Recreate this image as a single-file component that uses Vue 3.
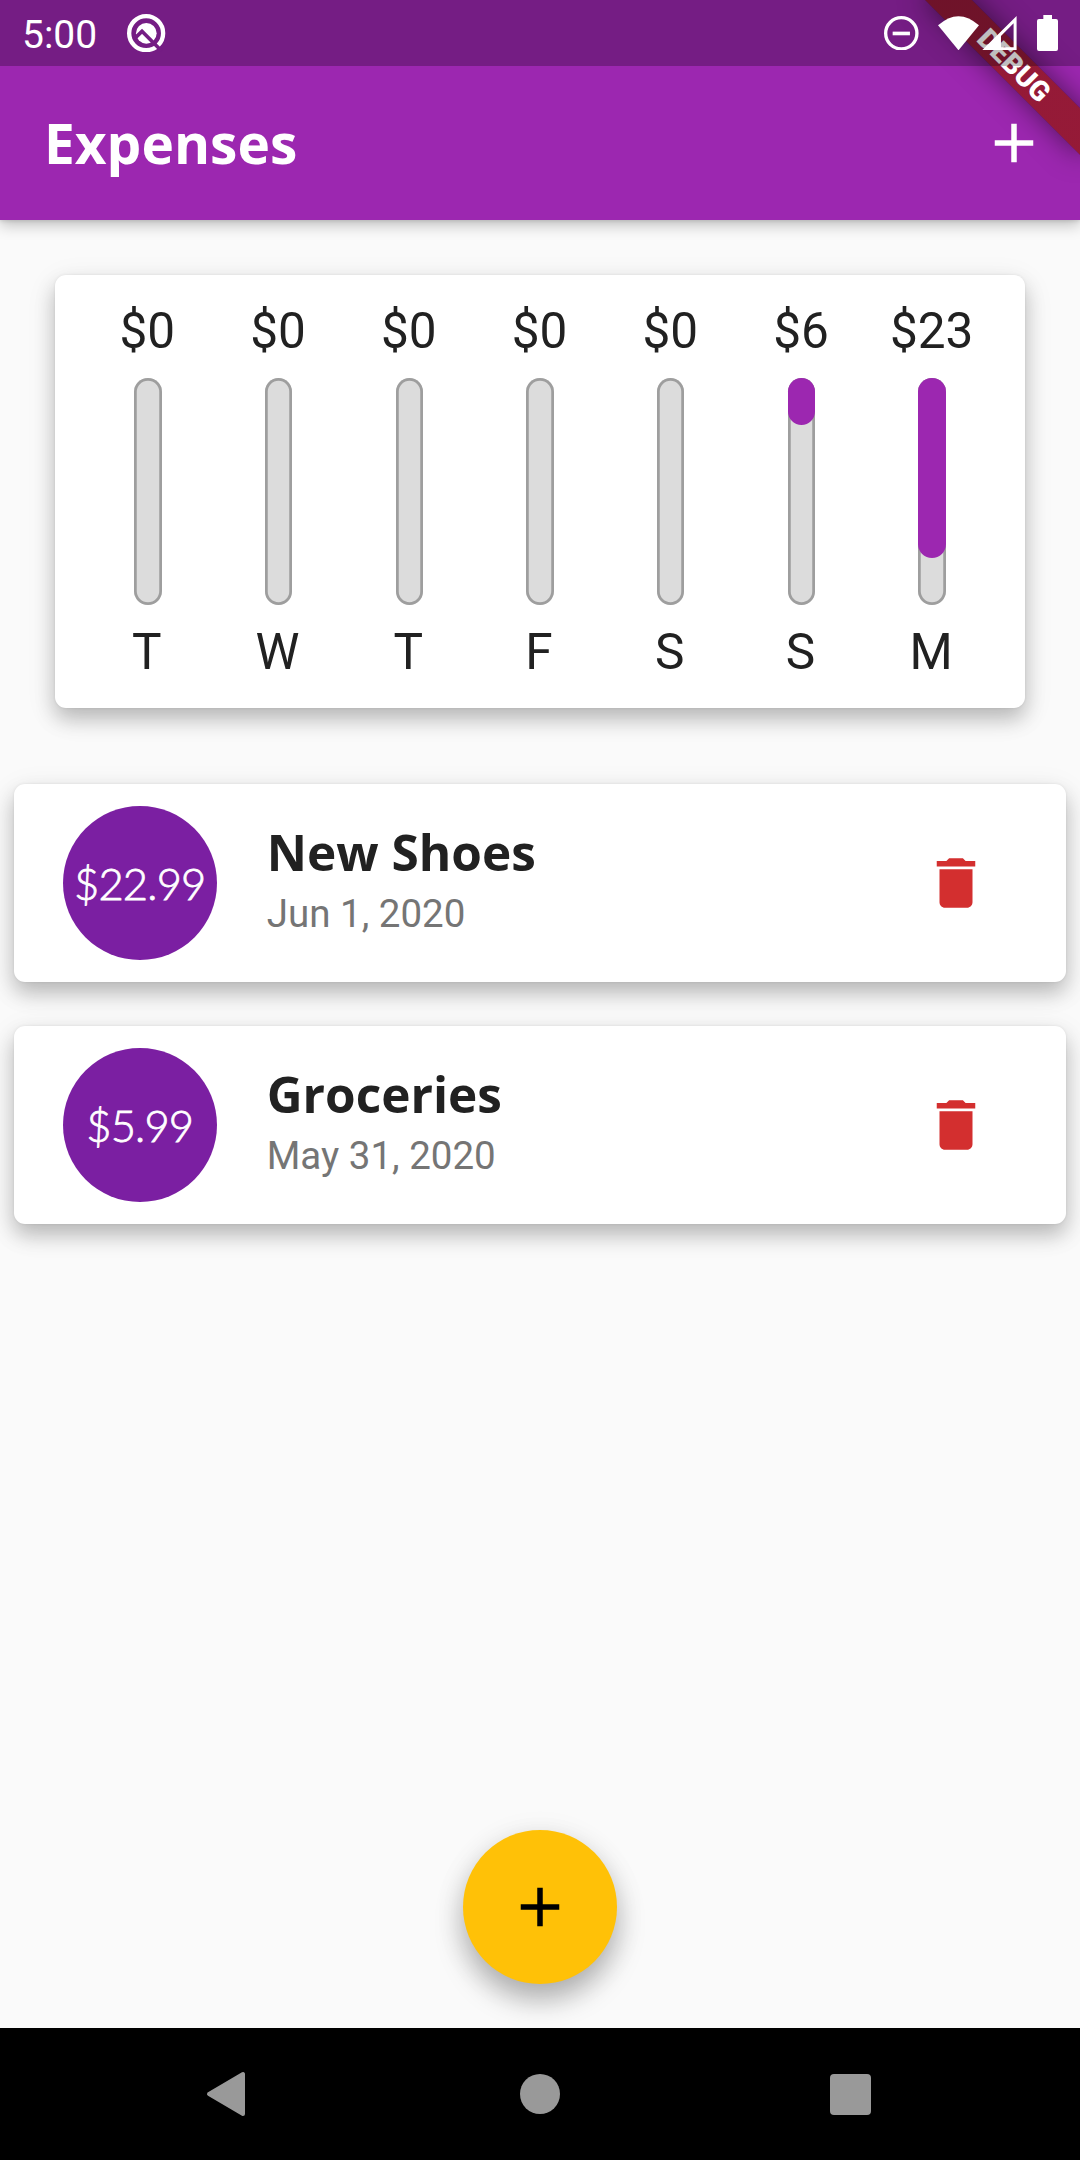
<script setup>
const days = [
  { label: 'T', amount: 0, fill: 0 },
  { label: 'W', amount: 0, fill: 0 },
  { label: 'T', amount: 0, fill: 0 },
  { label: 'F', amount: 0, fill: 0 },
  { label: 'S', amount: 0, fill: 0 },
  { label: 'S', amount: 6, fill: 20.67 },
  { label: 'M', amount: 23, fill: 79.33 },
]

const transactions = [
  { title: 'New Shoes', amount: '22.99', date: 'Jun 1, 2020' },
  { title: 'Groceries', amount: '5.99', date: 'May 31, 2020' },
]
</script>

<template>
  <div class="screen">
    <header class="app-bar">
      <h1>Expenses</h1>
      <button class="icon-button" aria-label="Add expense">
        <svg viewBox="0 0 24 24" width="66" height="66"><path fill="#fff" d="M19 13h-6v6h-2v-6H5v-2h6V5h2v6h6v2z" /></svg>
      </button>
    </header>

    <main>
      <section class="card chart">
        <div v-for="(day, i) in days" :key="i" class="day">
          <span class="day-amount">${{ day.amount }}</span>
          <div class="bar">
            <div v-if="day.fill" class="bar-fill" :style="{ height: day.fill + '%' }"></div>
          </div>
          <span class="day-label">{{ day.label }}</span>
        </div>
      </section>

      <ul class="list">
        <li v-for="tx in transactions" :key="tx.title" class="card tx">
          <div class="avatar"><span>${{ tx.amount }}</span></div>
          <div class="tx-text">
            <div class="tx-title">{{ tx.title }}</div>
            <div class="tx-date">{{ tx.date }}</div>
          </div>
          <button class="icon-button" aria-label="Delete">
            <svg viewBox="0 0 24 24" width="66" height="66"><path fill="#d32f2f" d="M6 19c0 1.1.9 2 2 2h8c1.1 0 2-.9 2-2V7H6v12zM19 4h-3.5l-1-1h-5l-1 1H5v2h14V4z" /></svg>
          </button>
        </li>
      </ul>
    </main>

    <nav class="nav-bar">
      <svg class="nav-back" viewBox="0 0 40 46" width="40" height="46"><path fill="#999" stroke="#999" stroke-width="4" stroke-linejoin="round" d="M37 3 V43 L3 23 Z" /></svg>
      <span class="nav-home"></span>
      <span class="nav-recent"></span>
    </nav>

    <button class="fab" aria-label="Add">
      <svg viewBox="0 0 24 24" width="66" height="66"><path fill="#000" d="M19 13h-6v6h-2v-6H5v-2h6V5h2v6h6v2z" /></svg>
    </button>

    <div class="banner">DEBUG</div>

    <div class="status-bar">
      <span class="clock">5:00</span>
      <svg class="q-icon" viewBox="382 42 115 115" width="38.3" height="38.3">
        <circle cx="439.500" cy="99.500" r="51" fill="none" stroke="#fff" stroke-width="13" />
        <circle cx="440" cy="100" r="31" fill="#fff" />
        <path fill="none" stroke="#751d84" stroke-width="11" d="M402 118 L427 94 L486 153" />
      </svg>
      <div class="status-icons">
        <svg class="dnd" viewBox="0 0 104 104" width="34.600" height="34.600">
          <circle cx="52" cy="52" r="47" fill="none" stroke="#fff" stroke-width="10" />
          <path fill="#fff" d="M26 47h52v11H26z" />
        </svg>
        <svg class="wifi" viewBox="294 45 123 103" width="41" height="34.300"><path fill="#fff" d="M294 73 Q355.500 18 417 73 L355.500 148 Z" /></svg>
        <svg class="signal" viewBox="427 47 104 103" width="34.600" height="34.300"><path fill="#fff" fill-rule="evenodd" d="M427 150 L531 47 V150 Z M484 107 V141 H522 V69 Z" /></svg>
        <svg class="battery" viewBox="591 45 63 108" width="21" height="36"><path fill="#fff" d="M610 45h26v12h12q6 0 6 6v84q0 6-6 6h-51q-6 0-6-6v-84q0-6 6-6h13z" /></svg>
      </div>
    </div>
  </div>
</template>

<style>
body {
  margin: 0;
  background: #fafafa;
}
</style>

<style scoped>
.screen {
  position: relative;
  display: flex;
  flex-direction: column;
  width: 1080px;
  height: 2160px;
  overflow: hidden;
  background: #fafafa;
  color: #212121;
  font-family: Roboto, sans-serif;
}
button {
  padding: 0;
  border: 0;
  background: none;
}
.icon-button,
.icon-button svg {
  display: block;
}
.app-bar {
  display: flex;
  align-items: center;
  justify-content: space-between;
  box-sizing: border-box;
  height: 220px;
  padding: 66px 33px 0 44px;
  background: #9c27b0;
  box-shadow: 0 5px 14px rgba(0, 0, 0, 0.24), 0 1px 4px rgba(0, 0, 0, 0.12);
}
h1 {
  margin: 0 0 2px;
  color: #fff;
  font: 700 55px/75px 'Open Sans', sans-serif;
}
main {
  flex: 1;
}
.card {
  border-radius: 11px;
  background: #fff;
  box-shadow: 0 11px 20px rgba(0, 0, 0, 0.21), 0 8px 32px rgba(0, 0, 0, 0.09), 0 0 3px rgba(0, 0, 0, 0.08);
}
.chart {
  display: flex;
  box-sizing: border-box;
  height: 432.500px;
  margin: 55px 55px 0;
  padding: 27.500px 27.500px 0;
}
.day {
  display: flex;
  flex: 1;
  flex-direction: column;
  align-items: center;
  font-size: 49.500px;
  line-height: 55px;
}
.day-amount {
  margin: 1px 1px 19.500px 0;
}
.bar {
  box-sizing: border-box;
  width: 27.500px;
  height: 226.500px;
  border-radius: 14px;
  background: #dcdcdc;
  box-shadow: inset 0 0 0 2.750px #9e9e9e;
}
.bar-fill {
  border-radius: 14px;
  background: #9c27b0;
}
.day-label {
  margin: 20px 2px 0 0;
}
.list {
  display: flex;
  flex-direction: column;
  gap: 44px;
  margin: 76.500px 13.750px 0;
  padding: 0;
  list-style: none;
}
.tx {
  display: flex;
  align-items: center;
  box-sizing: border-box;
  height: 198px;
  padding: 0 77px 1px 49.500px;
}
.avatar {
  display: flex;
  align-items: center;
  justify-content: center;
  width: 154px;
  height: 154px;
  margin-right: 49.500px;
  border-radius: 50%;
  background: #7b1fa2;
  color: #fff;
  font: 300 43.500px/52px Lato, sans-serif;
  letter-spacing: -0.800px;
  -webkit-text-stroke: 0.800px #fff;
}
.avatar span {
  margin-right: 1px;
}
.tx-text {
  flex: 1;
  padding-bottom: 11px;
}
.tx-title {
  margin-bottom: 5px;
  font: 700 49.500px/68px 'Open Sans', sans-serif;
}
.tx-date {
  color: #757575;
  font-size: 38.500px;
  line-height: 46px;
}
.nav-bar {
  display: flex;
  align-items: center;
  height: 132px;
  background: #000;
}
.nav-back {
  margin-left: 206px;
}
.nav-home {
  width: 40px;
  height: 40px;
  margin-left: 274px;
  border-radius: 50%;
  background: #999;
}
.nav-recent {
  width: 41px;
  height: 41px;
  margin-left: 270px;
  border-radius: 4px;
  background: #999;
}
.fab {
  position: absolute;
  bottom: 176px;
  left: 463px;
  display: flex;
  align-items: center;
  justify-content: center;
  width: 154px;
  height: 154px;
  border-radius: 50%;
  background: #ffc107;
  box-shadow: 0 16px 28px rgba(0, 0, 0, 0.27), 0 6px 32px rgba(0, 0, 0, 0.08);
}
.banner {
  position: absolute;
  top: 48.500px;
  left: 904.400px;
  width: 220px;
  height: 33px;
  background: linear-gradient(rgba(183, 28, 28, 0.63), rgba(183, 28, 28, 0.63)), rgba(0, 0, 0, 0.42);
  box-shadow: 0 0 28px rgba(0, 0, 0, 0.5);
  color: #fff;
  font-size: 28px;
  font-weight: 900;
  line-height: 33px;
  text-align: center;
  transform: rotate(45deg);
}
.status-bar {
  position: absolute;
  top: 0;
  left: 0;
  display: flex;
  align-items: center;
  box-sizing: border-box;
  width: 100%;
  height: 66px;
  padding: 0 22px;
  background: rgba(0, 0, 0, 0.25);
  color: #fff;
}
.clock {
  font-size: 39px;
  line-height: 46px;
  margin-top: 3px;
}
.q-icon {
  margin-left: 30px;
}
.status-icons {
  display: flex;
  align-items: center;
  margin-left: auto;
}
.wifi {
  margin-left: 19px;
}
.signal {
  margin-left: 3.500px;
}
.battery {
  margin-left: 20px;
}
</style>
